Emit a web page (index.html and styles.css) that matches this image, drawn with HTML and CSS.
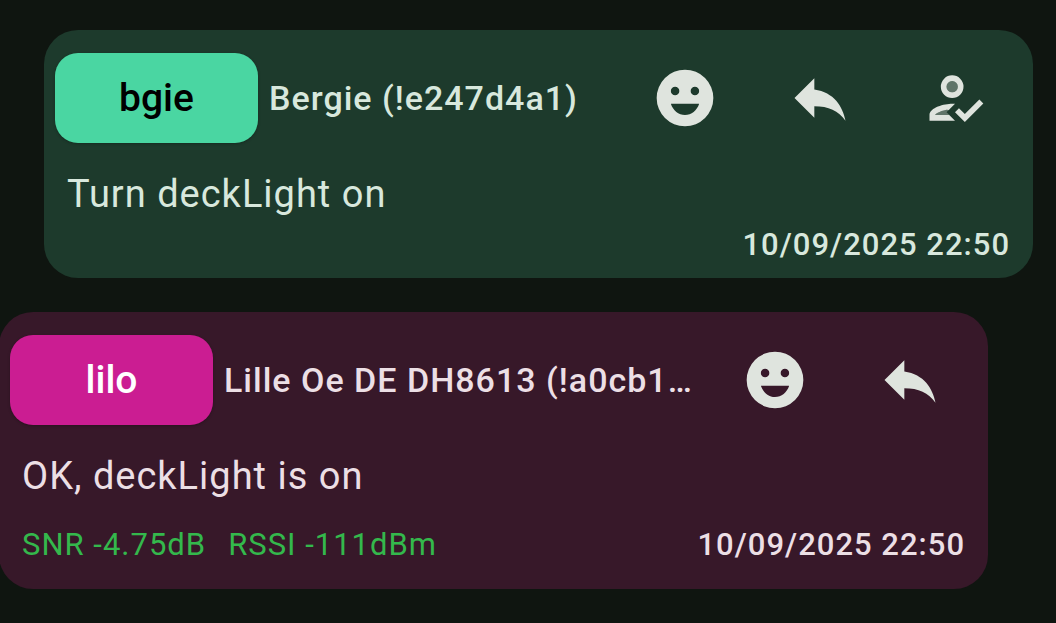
FILE: index.html
```html
<!DOCTYPE html>
<html lang="en">
<head>
<meta charset="utf-8">
<title>Messages</title>
<link rel="stylesheet" href="styles.css">
</head>
<body>
<main class="thread">
  <article class="message message-own">
    <header class="message-head">
      <button class="node-chip chip-green" type="button">bgie</button>
      <h2 class="sender">Bergie (!e247d4a1)</h2>
      <div class="actions">
        <button class="action" type="button" aria-label="React"><svg class="icon" viewBox="0 0 24 24"><path fill-rule="evenodd" d="M12 2a10 10 0 1 0 0 20a10 10 0 0 0 0-20zM8.500 8a1.500 1.500 0 1 1 0 3a1.500 1.500 0 0 1 0-3zM15.500 8a1.500 1.500 0 1 1 0 3a1.500 1.500 0 0 1 0-3zM12 18c-2.280 0-4.220-1.660-5-4h10c-.78 2.340-2.720 4-5 4z"/></svg></button>
        <button class="action" type="button" aria-label="Reply"><svg class="icon" viewBox="0 0 24 24"><path d="M10 9V5l-7 7 7 7v-4.100c5 0 8.500 1.600 11 5.100-1-5-4-10-11-11z"/></svg></button>
        <button class="action" type="button" aria-label="Delivery status"><svg class="icon" viewBox="0 0 24 24"><path fill-rule="evenodd" d="M11 4a4 4 0 1 0 0 8a4 4 0 0 0 0-8zM11 6a2 2 0 1 1 0 4a2 2 0 0 1 0-4z"/><path fill-rule="evenodd" d="M9 17l3-2.940c-.39-.04-.68-.06-1-.06-2.670 0-8 1.340-8 4v2h9l-3-3zM5 18c.2-.6 2.300-1.700 5-1.950L9 17l1 1z"/><path class="dim" d="M11 6a2 2 0 1 0 0 4a2 2 0 0 0 0-4zM5 18c.2-.6 2.300-1.700 5-1.950L9 17l1 1z"/><path d="M15.470 20.500L12 17l1.400-1.410 2.070 2.080 5.130-5.170 1.400 1.410z"/></svg></button>
      </div>
    </header>
    <p class="body">Turn deckLight on</p>
    <footer class="message-foot"><time class="time" datetime="2025-09-10T22:50">10/09/2025 22:50</time></footer>
  </article>
  <article class="message message-other">
    <header class="message-head">
      <button class="node-chip chip-pink" type="button">lilo</button>
      <h2 class="sender">Lille Oe DE DH8613 (!a0cb1…</h2>
      <div class="actions">
        <button class="action" type="button" aria-label="React"><svg class="icon" viewBox="0 0 24 24"><path fill-rule="evenodd" d="M12 2a10 10 0 1 0 0 20a10 10 0 0 0 0-20zM8.500 8a1.500 1.500 0 1 1 0 3a1.500 1.500 0 0 1 0-3zM15.500 8a1.500 1.500 0 1 1 0 3a1.500 1.500 0 0 1 0-3zM12 18c-2.280 0-4.220-1.660-5-4h10c-.78 2.340-2.720 4-5 4z"/></svg></button>
        <button class="action" type="button" aria-label="Reply"><svg class="icon" viewBox="0 0 24 24"><path d="M10 9V5l-7 7 7 7v-4.100c5 0 8.500 1.600 11 5.100-1-5-4-10-11-11z"/></svg></button>
      </div>
    </header>
    <p class="body">OK, deckLight is on</p>
    <footer class="message-foot">
      <span class="signal">SNR -4.75dB</span>
      <span class="signal">RSSI -111dBm</span>
      <time class="time" datetime="2025-09-10T22:50">10/09/2025 22:50</time>
    </footer>
  </article>
</main>
</body>
</html>
```
FILE: styles.css
```css
* { box-sizing: border-box; }
body {
  margin: 0;
  min-height: 100vh;
  background: #0f1510;
  color: #dfe4de;
  font-family: Roboto, "Noto Sans", sans-serif;
}
.thread {
  display: flex;
  flex-direction: column;
  gap: 34px;
  padding-top: 30px;
}
.message {
  padding: 23px 11px 13px;
  border-radius: 34px;
}
.message-own { margin: 0 23px 0 44px; background: #1d3a2c; color: #d8e8dd; }
.message-other { margin: 0 68px 0 -1px; background: #371829; color: #ecdfe5; padding-bottom: 24px; }
.message-head { display: flex; align-items: center; }
.node-chip {
  flex: none;
  width: 203px;
  height: 90px;
  padding: 0;
  border: 0;
  border-radius: 23px;
  box-shadow: 0 1px 3px rgba(0, 0, 0, 0.25);
  font: 500 39px/45px Roboto, sans-serif;
}
.chip-green { background: #4ad6a2; color: #000; }
.chip-pink { background: #cb1d92; color: #fff; }
.sender {
  flex: 1;
  min-width: 0;
  margin: 0 0 0 11px;
  overflow: hidden;
  white-space: nowrap;
  text-overflow: ellipsis;
  font-size: 34px;
  font-weight: 500;
  line-height: 56px;
  letter-spacing: 1px;
}
.actions { display: flex; flex: none; }
.action {
  display: grid;
  place-items: center;
  width: 135px;
  height: 90px;
  padding: 0;
  border: 0;
  background: none;
  color: #dfe4de;
}
.icon { width: 68px; height: 68px; fill: currentColor; }
.dim { opacity: 0.35; }
.body {
  margin: 23px 12px 0;
  font-size: 38px;
  line-height: 56px;
  letter-spacing: 1px;
}
.message-foot {
  display: flex;
  align-items: center;
  gap: 22px;
  margin-top: 3px;
  padding: 0 12px;
  font-size: 31px;
  line-height: 40px;
  letter-spacing: 1px;
}
.message-other .message-foot { margin-top: 21px; }
.signal { color: #34b84c; }
.time { margin-left: auto; font-weight: 500; }
```
